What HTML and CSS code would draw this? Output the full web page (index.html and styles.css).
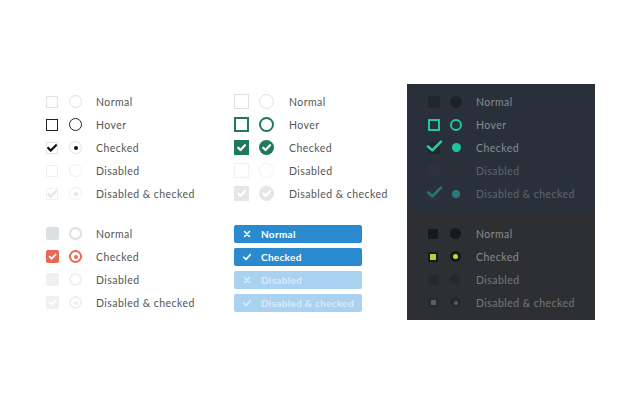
FILE: index.html
```html
<!DOCTYPE html>
<html lang="en">
<head>
    <meta charset="UTF-8">
    <title>Checkboxes &amp; radios</title>
    <link rel="stylesheet" href="styles.css">
</head>
<body>
    <div class="board">
        <!-- outline, black -->
        <div class="group top plain">
            <div class="opt"><span class="box"></span><span class="dot"></span><span class="txt">Normal</span></div>
            <div class="opt hover"><span class="box"></span><span class="dot"></span><span class="txt">Hover</span></div>
            <div class="opt checked"><span class="box"><svg viewBox="0 0 12 12"><polyline points="2.2,6 4.8,8.6 10,3.2"/></svg></span><span class="dot"><i></i></span><span class="txt">Checked</span></div>
            <div class="opt disabled"><span class="box"></span><span class="dot"></span><span class="txt">Disabled</span></div>
            <div class="opt disabled checked"><span class="box"><svg viewBox="0 0 12 12"><polyline points="2.2,6 4.8,8.6 10,3.2"/></svg></span><span class="dot"><i></i></span><span class="txt">Disabled &amp; checked</span></div>
        </div>

        <!-- outline, green -->
        <div class="group top green">
            <div class="opt"><span class="box"></span><span class="dot"></span><span class="txt">Normal</span></div>
            <div class="opt hover"><span class="box"></span><span class="dot"></span><span class="txt">Hover</span></div>
            <div class="opt checked"><span class="box"><svg viewBox="0 0 12 12"><polyline points="3.4,6.2 5.2,8 8.8,4.2"/></svg></span><span class="dot"><svg viewBox="0 0 12 12"><polyline points="3.4,6.2 5.2,8 8.8,4.2"/></svg></span><span class="txt">Checked</span></div>
            <div class="opt disabled"><span class="box"></span><span class="dot"></span><span class="txt">Disabled</span></div>
            <div class="opt disabled checked"><span class="box"><svg viewBox="0 0 12 12"><polyline points="3.4,6.2 5.2,8 8.8,4.2"/></svg></span><span class="dot"><svg viewBox="0 0 12 12"><polyline points="3.4,6.2 5.2,8 8.8,4.2"/></svg></span><span class="txt">Disabled &amp; checked</span></div>
        </div>

        <!-- dark, teal -->
        <div class="group top teal">
            <div class="opt"><span class="box"></span><span class="dot"></span><span class="txt">Normal</span></div>
            <div class="opt hover"><span class="box"></span><span class="dot"></span><span class="txt">Hover</span></div>
            <div class="opt checked"><span class="box"><svg viewBox="0 0 12 12"><polyline points="0,6 4,9.5 12,1.5"/></svg></span><span class="dot"><i></i></span><span class="txt">Checked</span></div>
            <div class="opt disabled"><span class="box"></span><span class="dot"></span><span class="txt">Disabled</span></div>
            <div class="opt disabled checked"><span class="box"><svg viewBox="0 0 12 12"><polyline points="0,6 4,9.5 12,1.5"/></svg></span><span class="dot"><i></i></span><span class="txt">Disabled &amp; checked</span></div>
        </div>

        <!-- flat, coral -->
        <div class="group bottom flat">
            <div class="opt"><span class="box"></span><span class="dot"></span><span class="txt">Normal</span></div>
            <div class="opt checked"><span class="box"><svg viewBox="0 0 12 12"><polyline points="3.4,6.2 5.2,8 8.8,4.2"/></svg></span><span class="dot"><i></i></span><span class="txt">Checked</span></div>
            <div class="opt disabled"><span class="box"></span><span class="dot"></span><span class="txt">Disabled</span></div>
            <div class="opt disabled checked"><span class="box"><svg viewBox="0 0 12 12"><polyline points="3.4,6.2 5.2,8 8.8,4.2"/></svg></span><span class="dot"><i></i></span><span class="txt">Disabled &amp; checked</span></div>
        </div>

        <!-- toggle buttons -->
        <div class="group bottom buttons">
            <div class="opt"><span class="btn"><svg class="ico" viewBox="0 0 8 8"><path d="M1.5,1.5 L6.5,6.5 M6.5,1.5 L1.5,6.5"/></svg>Normal</span></div>
            <div class="opt"><span class="btn"><svg class="ico" viewBox="0 0 8 8"><polyline points="0.8,4.2 3,6.4 7.4,1.6"/></svg>Checked</span></div>
            <div class="opt"><span class="btn off"><svg class="ico" viewBox="0 0 8 8"><path d="M1.5,1.5 L6.5,6.5 M6.5,1.5 L1.5,6.5"/></svg>Disabled</span></div>
            <div class="opt"><span class="btn off"><svg class="ico" viewBox="0 0 8 8"><polyline points="0.8,4.2 3,6.4 7.4,1.6"/></svg>Disabled &amp; checked</span></div>
        </div>

        <!-- dark, lime -->
        <div class="group bottom lime">
            <div class="opt"><span class="box"></span><span class="dot"></span><span class="txt">Normal</span></div>
            <div class="opt checked"><span class="box"><i></i></span><span class="dot"><i></i></span><span class="txt">Checked</span></div>
            <div class="opt disabled"><span class="box"></span><span class="dot"></span><span class="txt">Disabled</span></div>
            <div class="opt disabled checked"><span class="box"><i></i></span><span class="dot"><i></i></span><span class="txt">Disabled &amp; checked</span></div>
        </div>
    </div>
</body>
</html>
```

FILE: styles.css
```css
body {
    margin: 0;
    background: #fff;
    font-family: "Lato", "Liberation Sans", sans-serif;
}

.board {
    display: grid;
    grid-template-columns: 188px 173px 188px;
    grid-template-rows: 128px 108px;
    margin: 84px 0 0 46px;
}

.group.top { padding-top: 6px; }
.group.bottom { padding-top: 10px; }

.opt {
    display: flex;
    align-items: center;
    height: 23px;
}

.box, .dot {
    flex: none;
    box-sizing: border-box;
    display: flex;
    align-items: center;
    justify-content: center;
}
.dot { border-radius: 50%; }
.box svg, .dot svg { width: 100%; height: 100%; overflow: visible; }
.box polyline, .dot polyline {
    fill: none;
    stroke: currentColor;
    stroke-linecap: round;
    stroke-linejoin: round;
}
.dot i, .box i { display: block; border-radius: 50%; }

.txt {
    font-size: 10.5px;
    letter-spacing: 0.45px;
    color: #555;
}

/* outline black */
.plain .box { width: 12px; height: 12px; border: 1px solid #e2e2e2; margin-right: 11px; }
.plain .dot { width: 13px; height: 13px; border: 1px solid #e2e2e2; margin-right: 14px; }
.plain .hover .box, .plain .hover .dot { border-color: #222; }
.plain .checked .box { color: #111; }
.plain .checked .box svg { width: 12px; height: 12px; flex: none; }
.plain .checked polyline { stroke-width: 2.2; }
.plain .checked .dot i { width: 4px; height: 4px; background: #111; }
.plain .disabled .box, .plain .disabled .dot { border-color: #f0f0f0; }
.plain .disabled.checked .box { color: #e4e4e4; }
.plain .disabled.checked .dot i { background: #e4e4e4; }

/* outline green */
.green .box { width: 15px; height: 15px; border: 1.5px solid #e0e0e0; margin-right: 10px; }
.green .dot { width: 15px; height: 15px; border: 1.5px solid #e0e0e0; margin-right: 15px; }
.green .hover .box, .green .hover .dot { border: 2px solid #1f7a59; }
.green .checked .box, .green .checked .dot { border: none; background: #1f7a59; color: #fff; }
.green .checked polyline { stroke-width: 1.8; }
.green .disabled .box, .green .disabled .dot { border-color: #f1f1f1; }
.green .disabled.checked .box, .green .disabled.checked .dot { background: #e6e6e6; }

/* dark teal */
.teal {
    background: #2a3039;
    padding-left: 21px;
}
.teal .txt { color: #868c95; }
.teal .disabled .txt { color: #5f656e; }
.teal .box { width: 12px; height: 12px; background: #22262d; margin-right: 10px; }
.teal .dot { width: 12px; height: 12px; background: #1f2329; margin-right: 14px; }
.teal .hover .box, .teal .hover .dot { background: none; border: 2px solid #1fc89b; }
.teal .checked .box { color: #2cc7a0; }
.teal .checked .box svg { width: 15px; height: 13px; flex: none; margin-top: -3px; }
.teal .checked polyline { stroke-width: 2.4; }
.teal .checked .dot { background: none; }
.teal .checked .dot i { width: 9px; height: 9px; background: #22c497; }
.teal .disabled .box { background: #2d333c; }
.teal .disabled .dot { background: #2c3139; }
.teal .disabled.checked .box { color: #2a7473; }
.teal .disabled.checked .dot i { width: 8px; height: 8px; background: #28787a; }

/* flat coral */
.flat .box { width: 13px; height: 13px; background: #dde0e3; border-radius: 2px; margin-right: 10px; }
.flat .dot { width: 13px; height: 13px; border: 2.5px solid #dde0e3; margin-right: 14px; }
.flat .checked .box { background: #ea6753; color: #fff; }
.flat .checked polyline { stroke-width: 1.7; }
.flat .checked .dot { border-color: #ea6753; }
.flat .checked .dot i { width: 4px; height: 4px; background: #ea6753; }
.flat .disabled .box { background: #eff0f1; }
.flat .disabled .dot { border-color: #eff0f1; }
.flat .disabled.checked .box { color: #fff; }
.flat .disabled.checked .dot i { background: #eff0f1; }

/* toggle buttons */
.btn {
    display: flex;
    align-items: center;
    width: 128px;
    height: 18px;
    box-sizing: border-box;
    padding-left: 9px;
    background: #2a8ad0;
    border-radius: 2px;
    color: #fff;
    font-size: 10px;
    font-weight: 700;
    letter-spacing: 0.3px;
}
.btn.off {
    background: #a9d2f0;
    color: #d9ebf9;
}
.ico {
    width: 8px;
    height: 8px;
    margin-right: 10px;
    fill: none;
    stroke: currentColor;
    stroke-width: 1.6;
    stroke-linecap: round;
    stroke-linejoin: round;
}

/* dark lime */
.lime {
    background: #2d2f33;
    padding-left: 21px;
}
.lime .txt { color: #8b8d91; }
.lime .disabled .txt { color: #76787c; }
.lime .box { width: 10px; height: 10px; background: #18191b; margin-right: 12px; }
.lime .dot { width: 11px; height: 11px; background: #18191b; margin-right: 15px; }
.lime .checked .box i { width: 6px; height: 6px; border-radius: 0; background: #a9d43b; }
.lime .checked .dot i { width: 5px; height: 5px; background: #b6dd3c; }
.lime .disabled .box, .lime .disabled .dot { background: #28292c; }
.lime .disabled.checked .box i { width: 5px; height: 5px; background: #5c5e61; }
.lime .disabled.checked .dot i { width: 4px; height: 4px; background: #5c5e61; }
```
